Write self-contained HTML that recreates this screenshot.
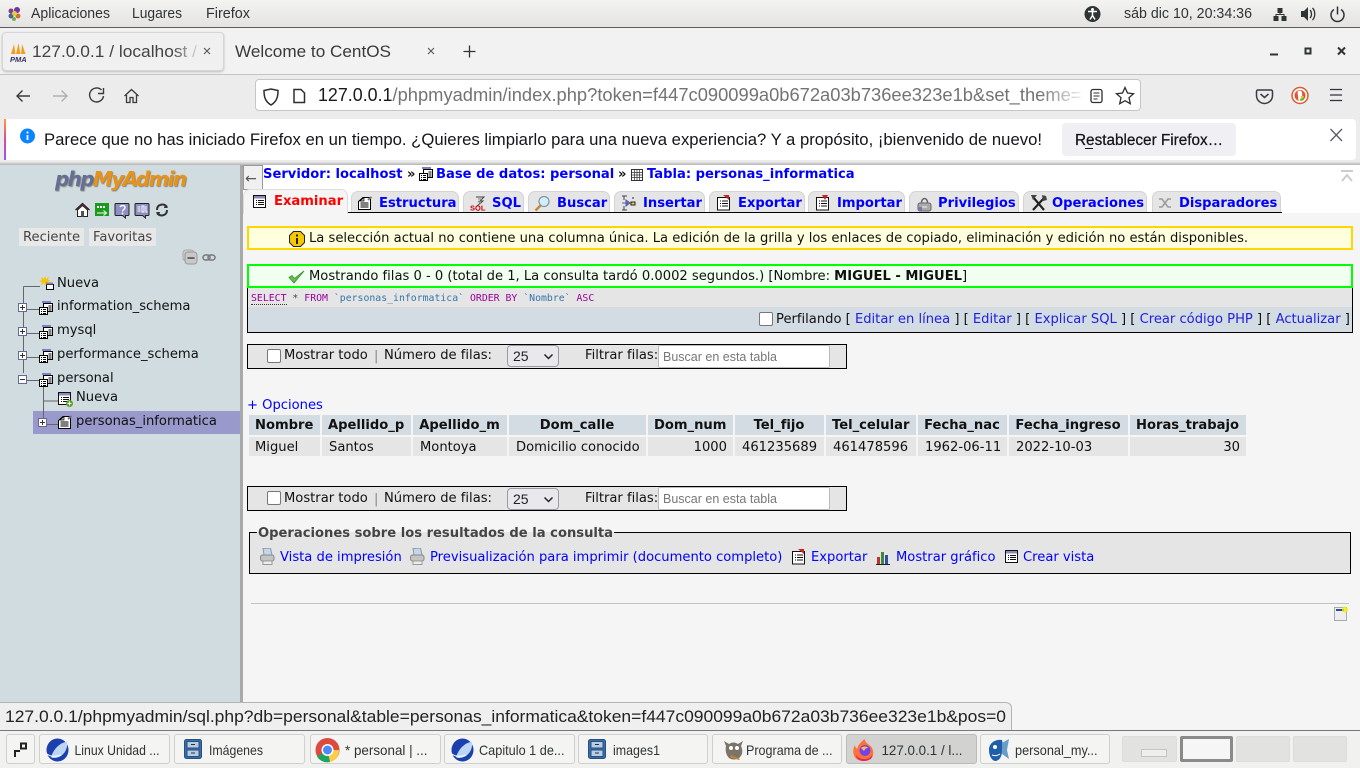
<!DOCTYPE html>
<html lang="es"><head><meta charset="utf-8"><title>127.0.0.1 / localhost</title>
<style>
html,body{margin:0;padding:0;width:1360px;height:768px;overflow:hidden;background:#f5f5f5}
body{position:relative;font-family:"DejaVu Sans",sans-serif;font-size:13.12px;color:#111}
.b,.t,svg.i{position:absolute}
.t{white-space:nowrap;line-height:16px;height:16px}
a{color:#0000ff;text-decoration:none}
.bl{font-weight:bold}
.tab{position:absolute;top:191px;height:21px;background:#e5e5e5;border:1px solid #d4d4d4;border-bottom:0;border-radius:7px 7px 0 0;box-sizing:border-box}
.c{position:absolute;background:#e5e5e5;line-height:21px;height:19px;white-space:nowrap;padding:0 6px 0 7px;box-sizing:border-box;top:437px}
.h{background:#d3dce3;font-weight:bold;top:415px;height:20px;line-height:21px;text-align:center;padding:0 7px 0 6px}
.cb{position:absolute;width:12px;height:12px;background:#fff;border:1px solid #77767b;border-radius:2px}
.sel{position:absolute;width:52px;height:22px;box-sizing:border-box;border:1px solid #9a9aa5;border-radius:4px;background:#e9e9ed}
.inp{position:absolute;width:172px;height:23px;box-sizing:border-box;background:#fff;border:1px solid #bbb;border-radius:2px;font:12.5px "Liberation Sans",sans-serif;color:#777;line-height:22px;padding-left:4px}
.tk{position:absolute;top:734px;height:30px;box-sizing:border-box;background:#f4f4f2;border:1px solid #cfcfcd;border-radius:3px}
.ws{position:absolute;top:736px;height:26px;box-sizing:border-box;background:#e2e2e0;border:1px solid #dcdcda;border-radius:2px}
</style></head><body>

<!-- top bar -->
<div class="b" style="left:0;top:0;width:1360px;height:27px;background:linear-gradient(#f3f3f2,#e4e3e1)"></div>
<div class="b" style="left:0;top:27px;width:1360px;height:1px;background:#5d5d5d"></div>
<!-- tab bar -->
<div class="b" style="left:0;top:28px;width:1360px;height:46px;background:#f2f2f2"></div>
<div class="b" style="left:0;top:74px;width:1360px;height:1px;background:#c4c4c4"></div>
<div class="b" style="left:2px;top:32px;width:222px;height:39px;box-sizing:border-box;background:#f0f0f0;border:1px solid #d6d6d6;border-radius:4px;box-shadow:0 1px 2px #bbb"></div>
<!-- nav -->
<div class="b" style="left:0;top:75px;width:1360px;height:90px;background:#ececec"></div>
<div class="b" style="left:255px;top:79px;width:886px;height:32px;box-sizing:border-box;background:#fff;border:1px solid #c6c6c6;border-radius:4px"></div>
<!-- notification -->
<div class="b" style="left:4px;top:119px;width:1352px;height:41px;background:#fff;border-radius:0 4px 4px 0"></div>
<div class="b" style="left:4px;top:119px;width:2px;height:41px;background:linear-gradient(#ff9a3c,#d64ba0 50%,#9059ff)"></div>
<div class="b" style="left:1062px;top:123px;width:174px;height:33px;background:#f0f0f4;border-radius:4px"></div>
<div class="b" style="left:0;top:162px;width:1360px;height:3px;background:linear-gradient(#e4e4e4,#b5b5b5)"></div>

<!-- sidebar -->
<div class="b" style="left:0;top:165px;width:240px;height:538px;background:#d0dce0"></div>
<div class="b" style="left:240px;top:165px;width:3px;height:538px;background:#a9a9a9"></div>
<div class="b" style="left:33px;top:411px;width:207px;height:23px;background:#9999cc"></div>
<div class="t" style="left:55px;top:168px;height:22px;font:italic bold 20px/22px 'DejaVu Sans',sans-serif;letter-spacing:-1.650px;text-shadow:1px 1px 1px #8a8a7a"><span style="color:#666d96">php</span><span style="color:#e8921a">MyAdmin</span></div>

<div class="b" style="left:19px;top:228px;width:65px;height:18px;background:#e8e8e8"></div>
<div class="b" style="left:89px;top:228px;width:67px;height:18px;background:#e8e8e8"></div>
<div class="t" style="left:23px;top:230px;color:#444">Reciente</div>
<div class="t" style="left:93px;top:230px;color:#444">Favoritas</div>

<svg class="i" style="left:0;top:165px" width="240" height="270">
 <g fill="none" stroke="#666" stroke-width="1">
  <path d="M23.500 121.500V208M23.500 121.500H40M27 144.500H40M27 168.500H40M27 192.500H40M27 215.500H40M43.500 222V259M43.500 236H58M47 259.500H58"/>
 </g>
 <g fill="#fff" stroke="#66669a"><rect x="18.500" y="138.500" width="8" height="8"/><rect x="18.500" y="162.500" width="8" height="8"/><rect x="18.500" y="186.500" width="8" height="8"/><rect x="18.500" y="210.500" width="8" height="8"/><rect x="38.500" y="253.500" width="8" height="8"/></g>
 <path d="M20 142.500h5M22.500 140v5M20 166.500h5M22.500 164v5M20 190.500h5M22.500 188v5M20 214.500h5M40 257.500h5M42.500 255v5" stroke="#333"/>
</svg>

<svg width="0" height="0" style="position:absolute"><defs>
 <g id="db"><rect x="3" y="0" width="9" height="2" fill="#8080c0"/><rect x="4.500" y="2.500" width="9" height="8" fill="#fff" stroke="#000"/><rect x=".5" y="6.500" width="8" height="7" fill="#fff" stroke="#000"/><path d="M9.500 5h3M9.500 7h3M9.500 9h3M2 8.500h1M4 8.500h3M2 10.500h1M4 10.500h3M2 12.500h1M4 12.500h3" stroke="#000"/></g>
 <g id="tb"><rect x=".5" y=".5" width="12" height="12" fill="#fff" stroke="#111"/><rect x="1" y="1" width="11" height="2.500" fill="#8a8ab8"/><path d="M3 5.500h1M5 5.500h6M3 7.500h1M5 7.500h6M3 9.500h1M5 9.500h6" stroke="#111"/></g>
 <g id="st"><path d="M.5 5.500 5 1.500h7.500v12H.5z" fill="#fff" stroke="#000"/><path d="M2.500 7h8M2.500 9h8M2.500 11h8" stroke="#000"/><path d="M2 5l4-3.500V5z" fill="#ccc" stroke="#000" stroke-width=".7"/><path d="M10 4l3.500-3" stroke="#777" stroke-width="2"/></g>
 <g id="pr"><path d="M3 .5l7.500-.5 1.500 7H4z" fill="#c6d6ea" stroke="#8899aa"/><rect x=".5" y="7" width="13.500" height="6" rx="2" fill="#c4c4c4" stroke="#888"/><path d="M3 13h9v3.500H3z" fill="#eee" stroke="#999"/></g>
 <g id="fc"><rect x=".5" y=".5" width="17" height="19" rx="2" fill="#3a6ea8" stroke="#28507e"/><rect x="3" y="2.500" width="12" height="6.500" fill="#b8cce4" stroke="#28507e"/><rect x="3" y="11" width="12" height="6.500" fill="#b8cce4" stroke="#28507e"/><path d="M7 5.500h4M7 14h4" stroke="#234"/></g>
 <g id="ld"><ellipse cx="11.500" cy="12" rx="11" ry="11.500" fill="#1c3fae"/><path d="M5 19C8 10 15 4 21 4c1 8-4 15-12 16-2 0-3 0-4-1z" fill="#bcd6f5"/><path d="M1 16c4 3 9 3 14 1" stroke="#fff" fill="none"/></g>
</defs></svg>

<svg class="i" style="left:39px;top:276px" width="16" height="15"><path d="M6 0l1 3 3-2-1 3 3 1-3 1 1 3-3-2-1 3-1-3-3 2 1-3-3-1 3-1-1-3 3 2z" fill="#f5c400"/><rect x="7.500" y="8.500" width="7" height="5" fill="#fff" stroke="#000"/><rect x="7" y="6.500" width="7" height="2" fill="#8080b0"/></svg>
<svg class="i" style="left:39px;top:301px" width="14" height="14"><use href="#db"/></svg>
<svg class="i" style="left:39px;top:325px" width="14" height="14"><use href="#db"/></svg>
<svg class="i" style="left:39px;top:349px" width="14" height="14"><use href="#db"/></svg>
<svg class="i" style="left:39px;top:373px" width="14" height="14"><use href="#db"/></svg>
<svg class="i" style="left:58px;top:392px" width="16" height="16"><use href="#tb"/><circle cx="11.500" cy="11.500" r="3.500" fill="#5aa02c"/><path d="M9.500 11.500h4M11.500 9.500v4" stroke="#fff"/></svg>
<svg class="i" style="left:58px;top:415px" width="14" height="15"><use href="#st"/></svg>
<div class="t" style="left:57px;top:276px">Nueva</div>
<div class="t" style="left:57px;top:299px">information_schema</div>
<div class="t" style="left:57px;top:323px">mysql</div>
<div class="t" style="left:57px;top:347px">performance_schema</div>
<div class="t" style="left:57px;top:371px">personal</div>
<div class="t" style="left:76px;top:390px">Nueva</div>
<div class="t" style="left:76px;top:414px">personas_informatica</div>

<!-- sidebar icons -->
<svg class="i" style="left:75px;top:202px" width="95" height="17">
 <path d="M.5 8 7.500 1.500 14.500 8" fill="#e33" stroke="#222" stroke-width="1.200"/><path d="M2.500 8v6.500h10V8L7.500 3.500z" fill="#fff" stroke="#222"/><rect x="6" y="9" width="3" height="5.500" fill="#555"/>
 <rect x="20" y="1" width="14" height="13" fill="#1c9a1c"/><path d="M22 11h9M28.500 8.500l3 2.500-3 2.500" stroke="#fff" fill="none"/><path d="M22 5h8" stroke="#fff" stroke-width="2" stroke-dasharray="2 1"/>
 <path d="M41 1.500h12a1 1 0 0 1 1 1v10a1 1 0 0 1-1 1h-2.500v2.500l-3-2.500H41a1 1 0 0 1-1-1v-10a1 1 0 0 1 1-1z" fill="#8f8fc4" stroke="#222"/><path d="M45 5c1-2 5-2 5 .5 0 2-2.500 2-2.500 4M47.500 10.500v2" stroke="#fff" stroke-width="1.400" fill="none"/>
 <path d="M61 1.500h12a1 1 0 0 1 1 1v10a1 1 0 0 1-1 1h-2.500v2.500l-3-2.500H61a1 1 0 0 1-1-1v-10a1 1 0 0 1 1-1z" fill="#8f8fc4" stroke="#222"/><path d="M62.500 5h3M62.500 7h3M62.500 9h3M67 4h2v6h-2zM71 4v6h1.500" stroke="#fff" fill="none"/>
 <path d="M82 8c0-6 7-7 10-3M92 8c0 6-7 7-10 3" stroke="#333" stroke-width="2" fill="none"/><path d="M90 2l3 4h-4zM84 14l-3-4h4z" fill="#333"/>
</svg>
<svg class="i" style="left:182px;top:249px" width="36" height="17">
 <rect x="1" y="1" width="11" height="11" rx="3" fill="#ccc" stroke="#aaa"/><rect x="3" y="3" width="12" height="12" rx="3" fill="#c8c8c8" stroke="#999"/><path d="M5.500 9h7" stroke="#666" stroke-width="2"/>
 <rect x="21" y="6" width="7" height="5" rx="2.500" fill="none" stroke="#777" stroke-width="1.500"/><rect x="26" y="6" width="7" height="5" rx="2.500" fill="none" stroke="#777" stroke-width="1.500"/>
</svg>

<!-- main -->
<div class="b" style="left:243px;top:165px;width:1117px;height:538px;background:#f5f5f5"></div>
<div class="b" style="left:243px;top:165px;width:1117px;height:48px;background:#fff"></div>
<div class="b" style="left:243px;top:165px;width:20px;height:25px;box-sizing:border-box;background:#f0f0f0;border:1px solid #999"></div>
<div class="t" style="left:245px;top:171px;color:#555;font-size:14px">←</div>

<svg class="i" style="left:1340px;top:170px" width="14" height="13"><path d="M1 1h12M2 11l5-6 5 6" stroke="#ccc" stroke-width="2" fill="none"/></svg>

<div class="t bl" style="left:263px;top:167px"><a href="#">Servidor: localhost</a></div>
<div class="t bl" style="left:407px;top:167px">»</div>
<svg class="i" style="left:419px;top:167px" width="14" height="14"><use href="#db"/></svg>
<div class="t bl" style="left:436px;top:167px"><a href="#">Base de datos: personal</a></div>
<div class="t bl" style="left:618px;top:167px">»</div>
<svg class="i" style="left:631px;top:169px" width="13" height="13"><rect x=".5" y=".5" width="11" height="11" fill="#fff" stroke="#333"/><path d="M.5 3.500h11M.5 6h11M.5 8.500h11M3.500 1v10M6 1v10M8.500 1v10" stroke="#333" stroke-width=".7"/></svg>
<div class="t bl" style="left:647px;top:167px"><a href="#">Tabla: personas_informatica</a></div>

<!-- tabs -->
<div class="b" style="left:348px;top:212px;width:934px;height:1px;background:#000"></div>
<div class="tab" style="left:243px;top:189px;width:105px;height:25px;background:#f5f5f5;border-color:#ddd"></div>
<div class="tab" style="left:351px;width:108px"></div>
<div class="tab" style="left:463px;width:61px"></div>
<div class="tab" style="left:528px;width:82px"></div>
<div class="tab" style="left:614px;width:91px"></div>
<div class="tab" style="left:709px;width:96px"></div>
<div class="tab" style="left:808px;width:97px"></div>
<div class="tab" style="left:909px;width:110px"></div>
<div class="tab" style="left:1023px;width:124px"></div>
<div class="tab" style="left:1152px;width:129px"></div>

<svg class="i" style="left:253px;top:195px" width="14" height="14"><use href="#tb"/></svg>
<div class="t bl" style="left:274px;top:194px;color:#ff0000">Examinar</div>
<svg class="i" style="left:358px;top:196px" width="15" height="15"><use href="#st"/></svg>
<div class="t bl" style="left:379px;top:196px"><a href="#">Estructura</a></div>
<svg class="i" style="left:470px;top:196px" width="17" height="15"><path d="M6 1h8L10 5h3L7 10" stroke="#444" fill="none"/><path d="M8 3l4 0M8 5l3 3" stroke="#888"/><text x="0" y="14.500" font-size="7.500" font-weight="bold" fill="#c00" font-family="Liberation Sans">SQL</text></svg>
<div class="t bl" style="left:492px;top:196px"><a href="#">SQL</a></div>
<svg class="i" style="left:534px;top:195px" width="17" height="17"><circle cx="10" cy="6.500" r="5" fill="#d8ecf8" stroke="#7a9ab0" stroke-width="1.300"/><path d="M6.500 10.500 1.500 15.500" stroke="#c8862a" stroke-width="2.400"/></svg>
<div class="t bl" style="left:557px;top:196px"><a href="#">Buscar</a></div>
<svg class="i" style="left:621px;top:195px" width="16" height="17"><path d="M1 1h5M1 15h5M3 1v4M3 11v4" stroke="#444"/><path d="M1 8h6M5 5l4 3-4 3z" fill="#7a7acb" stroke="#5555aa"/><path d="M10 7h4v3h-4zM12 2v2" stroke="#222" fill="#f2c94c"/></svg>
<div class="t bl" style="left:643px;top:196px"><a href="#">Insertar</a></div>
<svg class="i" style="left:717px;top:195px" width="14" height="16"><rect x=".5" y="2.500" width="12" height="12.500" fill="#fff" stroke="#111"/><path d="M3 6h1M5 6h6M3 8.500h1M5 8.500h6M3 11h1M5 11h6" stroke="#111"/><path d="M6 0h6v5z" fill="#c22"/></svg>
<div class="t bl" style="left:738px;top:196px"><a href="#">Exportar</a></div>
<svg class="i" style="left:816px;top:195px" width="14" height="16"><rect x=".5" y="2.500" width="12" height="12.500" fill="#fff" stroke="#111"/><path d="M3 6h1M5 6h6M3 8.500h1M5 8.500h6M3 11h1M5 11h6" stroke="#111"/><path d="M6 0h6L9 5z" fill="#c22"/></svg>
<div class="t bl" style="left:837px;top:196px"><a href="#">Importar</a></div>
<svg class="i" style="left:917px;top:197px" width="15" height="15"><rect x="1" y="6" width="13" height="8" rx="2" fill="#aaa" stroke="#666"/><path d="M4.500 6c0-6 6-6 6 0" stroke="#666" fill="none" stroke-width="1.500"/><path d="M5 10h5" stroke="#eee"/><rect x="1" y="10" width="4" height="4" fill="#77a"/></svg>
<div class="t bl" style="left:938px;top:196px"><a href="#">Privilegios</a></div>
<svg class="i" style="left:1030px;top:194px" width="17" height="18"><path d="M3 16 14 4M3 3l11 13" stroke="#222" stroke-width="2.200"/><path d="M1 1h6L3 6zM12 1l4 1 1 4-4 1z" fill="#444"/></svg>
<div class="t bl" style="left:1052px;top:196px"><a href="#">Operaciones</a></div>
<svg class="i" style="left:1158px;top:196px" width="15" height="14"><path d="M1 3h3l6 8h3M1 11h3l6-8h3" stroke="#999" fill="none" stroke-width="1.500"/></svg>
<div class="t bl" style="left:1179px;top:196px"><a href="#">Disparadores</a></div>

<!-- notices -->
<div class="b" style="left:247px;top:226px;width:1106px;height:24px;box-sizing:border-box;background:#ffffdd;border:2px solid #ffd700"></div>
<svg class="i" style="left:289px;top:231px" width="16" height="16"><path d="M4.500.5h7l4 4v7l-4 4h-7l-4-4v-7z" fill="#f5c800" stroke="#222"/><path d="M8 3.500v2M8 7v6" stroke="#222" stroke-width="2"/></svg>
<div class="t" style="left:309px;top:231px">La selección actual no contiene una columna única. La edición de la grilla y los enlaces de copiado, eliminación y edición no están disponibles.</div>

<div class="b" style="left:247px;top:264px;width:1106px;height:24px;box-sizing:border-box;background:#f0fff0;border:2px solid #00ff00"></div>
<svg class="i" style="left:288px;top:270px" width="17" height="14"><path d="M1 7.500 6 13 16 1 6.500 8.500 4 5.500z" fill="#62c24e" stroke="#3c8a32" stroke-width=".8"/></svg>
<div class="t" style="left:309px;top:269px">Mostrando filas 0 - 0 (total de 1, La consulta tardó 0.0002 segundos.) [Nombre: <b>MIGUEL - MIGUEL</b>]</div>

<div class="b" style="left:247px;top:288px;width:1106px;height:45px;box-sizing:border-box;background:#e5e5e5;border:1px solid #000;border-top:0"></div>
<div class="b" style="left:248px;top:307px;width:1104px;height:25px;background:#d3dce3"></div>
<div class="t" style="left:251px;top:291px;font:9.840px/16px 'DejaVu Sans Mono',monospace;color:#444"><span style="color:#990099;border-bottom:1px dotted #333">SELECT</span> * <span style="color:#990099">FROM</span> <span style="color:#3377aa">`personas_informatica`</span> <span style="color:#990099">ORDER BY</span> <span style="color:#3377aa">`Nombre`</span> <span style="color:#990099">ASC</span></div>
<div class="cb" style="left:759px;top:312px"></div>
<div class="t" style="left:776px;top:312px">Perfilando [ <a href="#" style="color:#2020e0">Editar en línea</a> ] [ <a href="#" style="color:#2020e0">Editar</a> ] [ <a href="#" style="color:#2020e0">Explicar SQL</a> ] [ <a href="#" style="color:#2020e0">Crear código PHP</a> ] [ <a href="#" style="color:#2020e0">Actualizar</a> ]</div>

<!-- nav 1 -->
<div class="b" style="left:247px;top:344px;width:600px;height:25px;box-sizing:border-box;background:#e5e5e5;border:1px solid #000"></div>
<div class="cb" style="left:267px;top:349px"></div>
<div class="t" style="left:284px;top:348px">Mostrar todo</div>
<div class="t" style="left:374px;top:349px;color:#888">|</div>
<div class="t" style="left:384px;top:348px">Número de filas:</div>
<div class="sel" style="left:507px;top:345px"></div>
<div class="t" style="left:513px;top:348px;font:14px/16px 'Liberation Sans',sans-serif;color:#222">25</div>
<svg class="i" style="left:543px;top:353px" width="11" height="7"><path d="M1.500 1.500 5.500 5.500 9.500 1.500" fill="none" stroke="#222" stroke-width="1.500"/></svg>
<div class="t" style="left:585px;top:348px">Filtrar filas:</div>
<div class="inp" style="left:658px;top:345px">Buscar en esta tabla</div>

<div class="t" style="left:247px;top:398px"><a href="#">+ Opciones</a></div>

<!-- table -->
<div class="c h" style="left:249px;width:71px">Nombre</div>
<div class="c h" style="left:322px;width:89px">Apellido_p</div>
<div class="c h" style="left:413px;width:94px">Apellido_m</div>
<div class="c h" style="left:509px;width:137px">Dom_calle</div>
<div class="c h" style="left:648px;width:85px">Dom_num</div>
<div class="c h" style="left:735px;width:89px">Tel_fijo</div>
<div class="c h" style="left:826px;width:90px">Tel_celular</div>
<div class="c h" style="left:918px;width:89px">Fecha_nac</div>
<div class="c h" style="left:1009px;width:119px">Fecha_ingreso</div>
<div class="c h" style="left:1130px;width:116px">Horas_trabajo</div>
<div class="c" style="left:249px;width:71px;padding-left:6px">Miguel</div>
<div class="c" style="left:322px;width:89px">Santos</div>
<div class="c" style="left:413px;width:94px">Montoya</div>
<div class="c" style="left:509px;width:137px">Domicilio conocido</div>
<div class="c" style="left:648px;width:85px;text-align:right">1000</div>
<div class="c" style="left:735px;width:89px">461235689</div>
<div class="c" style="left:826px;width:90px">461478596</div>
<div class="c" style="left:918px;width:89px">1962-06-11</div>
<div class="c" style="left:1009px;width:119px">2022-10-03</div>
<div class="c" style="left:1130px;width:116px;text-align:right">30</div>

<!-- nav 2 -->
<div class="b" style="left:247px;top:486px;width:600px;height:25px;box-sizing:border-box;background:#e5e5e5;border:1px solid #000"></div>
<div class="cb" style="left:267px;top:491px"></div>
<div class="t" style="left:284px;top:491px">Mostrar todo</div>
<div class="t" style="left:374px;top:492px;color:#888">|</div>
<div class="t" style="left:384px;top:491px">Número de filas:</div>
<div class="sel" style="left:507px;top:488px"></div>
<div class="t" style="left:513px;top:491px;font:14px/16px 'Liberation Sans',sans-serif;color:#222">25</div>
<svg class="i" style="left:543px;top:496px" width="11" height="7"><path d="M1.500 1.500 5.500 5.500 9.500 1.500" fill="none" stroke="#222" stroke-width="1.500"/></svg>
<div class="t" style="left:585px;top:491px">Filtrar filas:</div>
<div class="inp" style="left:658px;top:487px">Buscar en esta tabla</div>

<!-- fieldset -->
<div class="b" style="left:249px;top:532px;width:1102px;height:42px;box-sizing:border-box;background:#e5e5e5;border:1px solid #000"></div>
<div class="t bl" style="left:257px;top:526px;background:linear-gradient(#f5f5f5 6px,#e5e5e5 6px);padding:0 1px;color:#444">Operaciones sobre los resultados de la consulta</div>
<svg class="i" style="left:260px;top:548px" width="16" height="18"><use href="#pr"/></svg>
<div class="t" style="left:280px;top:550px"><a href="#">Vista de impresión</a></div>
<svg class="i" style="left:410px;top:548px" width="16" height="18"><use href="#pr"/></svg>
<div class="t" style="left:430px;top:550px"><a href="#">Previsualización para imprimir (documento completo)</a></div>
<svg class="i" style="left:792px;top:549px" width="14" height="16"><rect x=".5" y="2.500" width="12" height="12.500" fill="#fff" stroke="#111"/><path d="M3 6h1M5 6h6M3 8.500h1M5 8.500h6M3 11h1M5 11h6" stroke="#111"/><path d="M6 0h6v5z" fill="#c22"/></svg>
<div class="t" style="left:811px;top:550px"><a href="#">Exportar</a></div>
<svg class="i" style="left:876px;top:550px" width="15" height="15"><rect x="1" y="7" width="3" height="7" fill="#b33"/><rect x="5" y="2" width="3" height="12" fill="#3a8a3a"/><rect x="9" y="5" width="3" height="9" fill="#2c4fa8"/><path d="M0 14.500h14" stroke="#222"/></svg>
<div class="t" style="left:896px;top:550px"><a href="#">Mostrar gráfico</a></div>
<svg class="i" style="left:1005px;top:550px" width="14" height="14"><use href="#tb"/></svg>
<div class="t" style="left:1023px;top:550px"><a href="#">Crear vista</a></div>

<div class="b" style="left:251px;top:603px;width:1098px;height:1px;background:#c2c2c2"></div>
<svg class="i" style="left:1333px;top:605px" width="16" height="17"><rect x="1.500" y="2.500" width="12" height="13" fill="#eee" stroke="#aaa"/><rect x="3" y="4" width="8" height="2" fill="#2c4c9c"/><circle cx="12" cy="4.500" r="3" fill="#f4f000" opacity=".8"/></svg>

<!-- status + taskbar -->
<div class="b" style="left:0;top:702px;width:1012px;height:29px;box-sizing:border-box;background:#efefef;border:1px solid #b4b4b4;border-left:0;border-bottom:0;border-radius:0 6px 0 0"></div>
<div class="b" style="left:0;top:730px;width:1360px;height:38px;background:#f1f1ef;border-top:1px solid #777;box-sizing:border-box"></div>
<div class="tk" style="left:6px;width:29px"></div>
<div class="tk" style="left:39px;width:131px"></div>
<div class="tk" style="left:174px;width:131px"></div>
<div class="tk" style="left:310px;width:131px"></div>
<div class="tk" style="left:444px;width:131px"></div>
<div class="tk" style="left:578px;width:130px"></div>
<div class="tk" style="left:712px;width:130px"></div>
<div class="tk" style="left:846px;width:131px;background:#d2d2d0;border-color:#bbb"></div>
<div class="tk" style="left:980px;width:130px"></div>
<div class="ws" style="left:1122px;width:55px"></div>
<div class="b" style="left:1141px;top:749px;width:26px;height:8px;box-sizing:border-box;background:#eee;border:1px solid #c4c4c4"></div>
<div class="ws" style="left:1180px;width:53px;background:#f6f6f6;border:3px solid #8a8a8a"></div>
<div class="ws" style="left:1236px;width:54px"></div>
<div class="ws" style="left:1293px;width:54px"></div>

<svg class="i" style="left:0;top:0" width="1360" height="768" font-family="'Liberation Sans',sans-serif">
 <!-- gnome foot -->
 <g><circle cx="11" cy="11" r="2.500" fill="#8a3a8a"/><circle cx="17" cy="10" r="3" fill="#6a3aa0"/><circle cx="11" cy="16" r="2.500" fill="#3a6a9a"/><circle cx="18" cy="16" r="2.500" fill="#d86a3a"/><circle cx="14.500" cy="13.500" r="2.500" fill="#e8c840"/><circle cx="14" cy="19" r="2" fill="#7ab040"/></g>
 <g fill="#2e3436" font-size="14.500">
  <text x="31" y="18" textLength="79" lengthAdjust="spacingAndGlyphs">Aplicaciones</text>
  <text x="132" y="18" textLength="50" lengthAdjust="spacingAndGlyphs">Lugares</text>
  <text x="206" y="18" textLength="44" lengthAdjust="spacingAndGlyphs">Firefox</text>
  <text x="1124" y="18" textLength="128" lengthAdjust="spacingAndGlyphs">sáb dic 10, 20:34:36</text>
 </g>
 <circle cx="1092.500" cy="14" r="8" fill="#2e3436"/><circle cx="1092.500" cy="9.500" r="1.500" fill="#fff"/><path d="M1088 11.500h9M1092.500 12v3.500l-2.500 4M1092.500 15.500l2.500 4" stroke="#fff" stroke-width="1.500" fill="none"/>
 <path d="M1277.500 8h5v5h-5zM1273.500 16h5v5h-5zM1281.500 16h5v5h-5z" fill="#2e3436"/><path d="M1280 13v2M1276 16v-1.500h8V16" stroke="#2e3436" fill="none"/>
 <path d="M1301 11h3l4-4v14l-4-4h-3z" fill="#2e3436"/><path d="M1310 10c2 2 2 6 0 8M1312.500 8c3 3 3 9 0 12" stroke="#2e3436" fill="none" stroke-width="1.300"/>
 <path d="M1334 9.500a6.500 6.500 0 1 0 7 0M1337.500 6.500v8" stroke="#2e3436" fill="none" stroke-width="1.500"/>

 <!-- tab favicon -->
 <g><path d="M11 54l3-10 1.500 10zM16 54l2.500-11 2 11zM21 54l1-10 3.500 10z" fill="#f0a020"/><text x="10" y="62" font-size="7.500" font-weight="bold" font-style="italic" fill="#336">PMA</text></g>
 <defs><linearGradient id="f1"><stop offset=".85" stop-color="#444"/><stop offset="1" stop-color="#444" stop-opacity=".15"/></linearGradient>
 <linearGradient id="f2" gradientUnits="userSpaceOnUse" x1="392" x2="1082"><stop offset=".94" stop-color="#737373"/><stop offset="1" stop-color="#737373" stop-opacity=".1"/></linearGradient></defs>
 <text x="32" y="57" font-size="17" fill="url(#f1)" textLength="165" lengthAdjust="spacingAndGlyphs">127.0.0.1 / localhost /</text>
 <text x="235" y="57" font-size="17" fill="#3a3a3a" textLength="156" lengthAdjust="spacingAndGlyphs">Welcome to CentOS</text>
 <path d="M204 48l6 6M210 48l-6 6M428 48l6 6M434 48l-6 6" stroke="#555" stroke-width="1.100"/>
 <path d="M463.500 51.500h12M469.500 45.500v12" stroke="#333" stroke-width="1.300"/>
 <path d="M1270 54.500h8" stroke="#2e3436" stroke-width="2"/><rect x="1305.500" y="48.500" width="5" height="5" fill="none" stroke="#2e3436" stroke-width="2"/><path d="M1338 47.500l7 7M1345 47.500l-7 7" stroke="#2e3436" stroke-width="2"/>

 <!-- nav icons -->
 <path d="M30 96H17M22.500 90.500 17 96l5.500 5.500" fill="none" stroke="#3a3a3a" stroke-width="1.400"/>
 <path d="M53 96H67M61.500 90.500 67 96l-5.500 5.500" fill="none" stroke="#b0b0b0" stroke-width="1.400"/>
 <path d="M101.500 90a7 7 0 1 0 2 6" fill="none" stroke="#3a3a3a" stroke-width="1.400"/><path d="M103.500 88v5.500H98" fill="none" stroke="#3a3a3a" stroke-width="1.400"/>
 <path d="M124.500 96l7-6.500 7 6.500M126.500 95v7.500h3.500v-5h3v5h3.500V95" fill="none" stroke="#3a3a3a" stroke-width="1.300"/>
 <path d="M264 90.500l7-1.500 7 1.500c0 6-1 11-7 14.500-6-3.500-7-8.500-7-14.500z" fill="none" stroke="#2e2e2e" stroke-width="1.500"/>
 <path d="M294 89.500h7l3.500 3.500v9.500h-10.500z" fill="none" stroke="#2e2e2e" stroke-width="1.500"/>
 <text x="318" y="101" font-size="18.500" fill="#1a1a1a" textLength="74.500" lengthAdjust="spacingAndGlyphs">127.0.0.1</text>
 <text x="392.500" y="101" font-size="18.500" fill="url(#f2)" textLength="689" lengthAdjust="spacingAndGlyphs">/phpmyadmin/index.php?token=f447c090099a0b672a03b736ee323e1b&amp;set_theme=</text>
 <rect x="1091" y="89.500" width="11" height="13" rx="2" fill="none" stroke="#2e2e2e" stroke-width="1.300"/><path d="M1093.500 93h6M1093.500 96h6M1093.500 99h4" stroke="#2e2e2e"/>
 <path d="M1125 87.500l2.500 5.500 6 .7-4.500 4 1.300 6-5.300-3-5.300 3 1.300-6-4.500-4 6-.7z" fill="none" stroke="#2e2e2e" stroke-width="1.300"/>
 <path d="M1258 90h13a1.500 1.500 0 0 1 1.500 1.500v4a8 8 0 0 1-16 0v-4a1.500 1.500 0 0 1 1.500-1.500z" fill="none" stroke="#3a3a44" stroke-width="1.500"/><path d="M1260.500 94l4 3.500 4-3.500" fill="none" stroke="#3a3a44" stroke-width="1.500"/>
 <circle cx="1300" cy="95.500" r="8" fill="#fff" stroke="#de5833" stroke-width="1.500"/><circle cx="1300" cy="95.500" r="5.500" fill="#de5833"/><path d="M1297.500 91.500c2-1.500 4-1 4.500 1l.5 7-2 2-2-1z" fill="#fff"/><path d="M1300 99l4-2v3l-4 1z" fill="#7ab040"/><path d="M1301 96h3l-1 2h-2z" fill="#f5c400"/>
 <path d="M1330 89.500h12M1330 95h12M1330 100.500h12" stroke="#333340" stroke-width="1.300"/>

 <!-- notification -->
 <circle cx="27.500" cy="136" r="7.500" fill="#0a84ff"/><path d="M27.500 135v5M27.500 131.500v2" stroke="#fff" stroke-width="1.800"/>
 <text x="44" y="145" font-size="16.500" fill="#15141a" textLength="998" lengthAdjust="spacingAndGlyphs">Parece que no has iniciado Firefox en un tiempo. ¿Quieres limpiarlo para una nueva experiencia? Y a propósito, ¡bienvenido de nuevo!</text>
 <text x="1075" y="145" font-size="15.500" fill="#15141a" stroke="#15141a" stroke-width=".25" textLength="148" lengthAdjust="spacingAndGlyphs">Restablecer Firefox…</text>
 <path d="M1085 148.500h8" stroke="#15141a"/>
 <path d="M1330.500 129l11.500 12M1342 129l-11.500 12" stroke="#5b5b66" stroke-width="1.300"/>

 <!-- status text -->
 <text x="5" y="722" font-size="16.500" fill="#222" textLength="1001" lengthAdjust="spacingAndGlyphs">127.0.0.1/phpmyadmin/sql.php?db=personal&amp;table=personas_informatica&amp;token=f447c090099a0b672a03b736ee323e1b&amp;pos=0</text>

 <!-- taskbar -->
 <path d="M15 757v-6h5M21 743.500h5v5h-5z" fill="none" stroke="#222" stroke-width="2"/>
 <use href="#ld" x="46" y="738"/><use href="#ld" x="451" y="738"/>
 <use href="#fc" x="184" y="739"/><use href="#fc" x="588" y="739"/>
 <circle cx="327.500" cy="750" r="12" fill="#dd4b3e"/><path d="M327.500 750 317 756.500a12 12 0 0 0 13 5.500z" fill="#1da462"/><path d="M327.500 750h11.500a12 12 0 0 1-9 12z" fill="#ffcd46"/><circle cx="327.500" cy="750" r="6" fill="#fff"/><circle cx="327.500" cy="750" r="4.500" fill="#4c8bf5"/>
 <g transform="translate(722,738)"><path d="M4 8 2 3l5 3c3-2 6-2 9 0l5-3-2 5c2 4 2 9-2 12-3 2-7 2-10 0-3-3-4-8-3-12z" fill="#7a7568"/><circle cx="9" cy="10" r="2" fill="#fff"/><circle cx="15" cy="10" r="2" fill="#fff"/><path d="M9 17l9 4-1 1-9-3z" fill="#c8862a"/></g>
 <g transform="translate(853,738)"><path d="M11.500 1c1 4 4 5 7 8 3 5 2 10-1 12s-10 3-14 0C0 18-1 12 2 7c0 2 1 3 2 4 1-4 4-7 7.500-10z" fill="#ff7139"/><path d="M3 17c3 5 13 6 16 0 1 3-3 6-8 6s-8-3-8-6z" fill="#e22850"/><circle cx="12" cy="12.500" r="5.500" fill="#7542e5"/><path d="M8 10c2-2 6-2 7 0-2 0-3 1-4 3-1-1-2-2-3-3z" fill="#ffbd4f"/></g>
 <g transform="translate(988,738)"><path d="M1 12C1 5 7 1 14 2c1 4 1 8 0 11 0 6-3 10-7 10-4-1-6-6-6-11z" fill="#1f5ea8"/><path d="M14 5l7-4-2 11 2 9-7-5z" fill="#6a9cc8"/><circle cx="7" cy="9" r="2" fill="#fff"/><path d="M4 17c3 1 5 1 8-1" stroke="#fff" fill="none"/></g>
 <g fill="#2e3436" font-size="13.800">
  <text x="74.500" y="755" textLength="85" lengthAdjust="spacingAndGlyphs">Linux Unidad ...</text>
  <text x="209" y="755" textLength="54" lengthAdjust="spacingAndGlyphs">Imágenes</text>
  <text x="345" y="755" textLength="82.500" lengthAdjust="spacingAndGlyphs">* personal | ...</text>
  <text x="479" y="755" textLength="85.500" lengthAdjust="spacingAndGlyphs">Capitulo 1 de...</text>
  <text x="613" y="755" textLength="47" lengthAdjust="spacingAndGlyphs">images1</text>
  <text x="746" y="755" textLength="86.500" lengthAdjust="spacingAndGlyphs">Programa de ...</text>
  <text x="881.500" y="755" textLength="81" lengthAdjust="spacingAndGlyphs">127.0.0.1 / l...</text>
  <text x="1015" y="755" textLength="82.500" lengthAdjust="spacingAndGlyphs">personal_my...</text>
 </g>
</svg>
</body></html>
